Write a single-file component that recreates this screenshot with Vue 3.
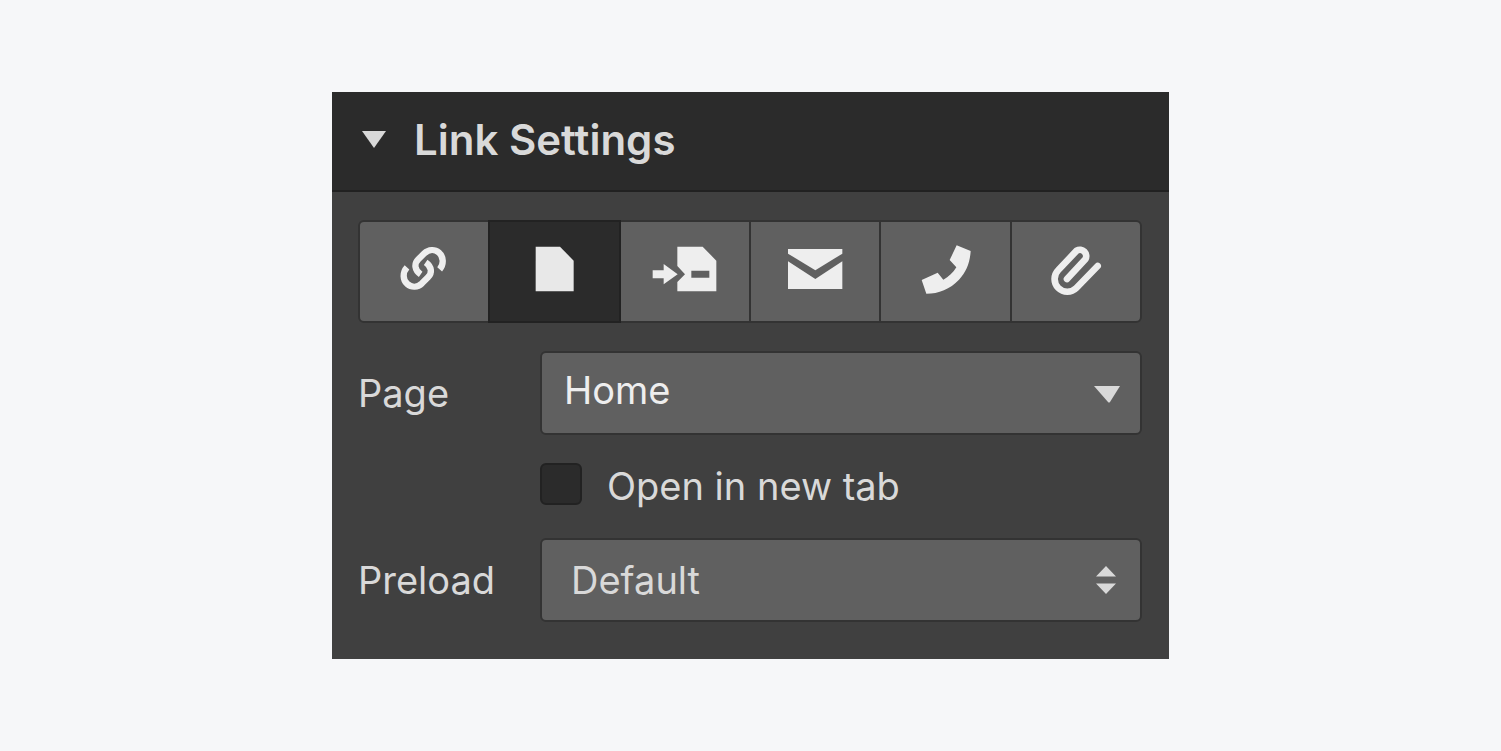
<template>
  <main class="page">
    <section class="panel">
      <header class="panel-header">
        <button type="button" class="toggle" :aria-expanded="open" @click="open = !open">
          <svg class="caret" viewBox="0 0 24 17" aria-hidden="true">
            <path d="M0 0H24L12 17Z" />
          </svg>
          <span>Link Settings</span>
        </button>
      </header>

      <form v-if="open" class="panel-body" @submit.prevent>
        <div class="types">
          <button
            v-for="type in types"
            :key="type.id"
            type="button"
            class="type"
            :class="{ active: type.id === selected }"
            :aria-label="type.label"
            :aria-pressed="type.id === selected"
            @click="selected = type.id"
          >
            <svg class="icon" viewBox="0 0 216 168" aria-hidden="true">
              <path
                v-for="d in type.paths"
                :key="d"
                :d="d"
                :class="type.stroke ? 'line line-' + type.stroke : 'solid'"
              />
            </svg>
          </button>
        </div>

        <div class="row">
          <label for="page">Page</label>
          <div class="field">
            <select id="page" v-model="page" class="select select-page">
              <option>Home</option>
            </select>
            <svg class="arrow arrow-down" viewBox="0 0 26 17" aria-hidden="true">
              <path d="M0 0H26L16 16Q15 17 14 16Z" />
            </svg>
          </div>
        </div>

        <div class="row">
          <div class="check">
            <input id="new-tab" v-model="newTab" type="checkbox" />
            <label for="new-tab">Open in new tab</label>
          </div>
        </div>

        <div class="row">
          <label for="preload">Preload</label>
          <div class="field">
            <select id="preload" v-model="preload" class="select select-preload">
              <option>Default</option>
            </select>
            <svg class="arrow arrow-both" viewBox="0 0 20 28" aria-hidden="true">
              <path d="M10 0L20 10.500H0ZM0 17.500H20L10 28Z" />
            </svg>
          </div>
        </div>
      </form>
    </section>
  </main>
</template>

<script setup>
import { ref } from 'vue'

const open = ref(true)
const selected = ref('page')
const page = ref('Home')
const newTab = ref(false)
const preload = ref('Default')

const types = [
  {
    id: 'url',
    label: 'URL',
    stroke: 'chain',
    paths: [
      'M155 79C168 64 167 41 153 29C140 18 122 19 109 31L91 49C78 62 79 81 98 94',
      'M57 73C43 88 44 111 58 123C71 134 89 133 102 121L120 103C133 90 132 71 113 58'
    ]
  },
  {
    id: 'page',
    label: 'Page',
    paths: ['M53 11H126L167 53V145H53Z']
  },
  {
    id: 'section',
    label: 'Page section',
    paths: [
      'M11 82H44V63L86 94L44 124V106H11Z',
      'M85 11H161L202 53V145H85V117L108 94L85 69ZM127 83V104H181V83Z'
    ]
  },
  {
    id: 'email',
    label: 'Email',
    paths: ['M27 18H190V32L109 82L27 32Z', 'M27 55L109 108L190 55V138H27Z']
  },
  {
    id: 'phone',
    label: 'Phone',
    paths: ['M143 7L185 24C183 60 171 87 150 110C123 138 89 152 52 152L38 111L86 89L103 110C119 102 133 88 142 73L122 51Z']
  },
  {
    id: 'file',
    label: 'File',
    stroke: 'clip',
    paths: ['M173 69L109 135A38 38 0 0 1 55 81L110 23A19 19 0 0 1 136 49L81 108']
  }
]
</script>

<style>
body {
  margin: 0;
  background: #f6f7f9;
}
</style>

<style scoped>
.page {
  box-sizing: border-box;
  min-height: 100vh;
  display: flex;
  align-items: center;
  justify-content: center;
  font-family: Inter, "Liberation Sans", sans-serif;
  font-size: 38px;
  font-weight: 400;
  line-height: 47px;
  color: #d9d9d9;
}

.panel {
  width: 100%;
  max-width: 837px;
  background: #404040;
}

.panel-header {
  background: #2b2b2b;
  border-bottom: 2px solid #212121;
}

.toggle {
  display: flex;
  align-items: center;
  gap: 28px;
  width: 100%;
  padding: 24px 30px 27px;
  border: 0;
  background: none;
  color: inherit;
  font: inherit;
  font-size: 42px;
  font-weight: 600;
  cursor: pointer;
}

.caret {
  width: 24px;
  height: 17px;
  fill: #d9d9d9;
}

.panel-body {
  display: flex;
  flex-direction: column;
  gap: 28px;
  padding: 28px 27px 37px 26px;
}

.types {
  display: flex;
}

.type {
  flex: 1;
  display: flex;
  align-items: center;
  justify-content: center;
  height: 103px;
  padding: 0 0 1px;
  border: 2px solid #333;
  background: #606060;
  cursor: pointer;
}

.type + .type {
  margin-left: -2px;
}

.type:first-child {
  border-radius: 6px 0 0 6px;
}

.type:last-child {
  border-radius: 0 6px 6px 0;
}

.type.active {
  position: relative;
  background: #2b2b2b;
  border-color: #222;
}

.icon {
  width: 72px;
  height: 56px;
}

.solid {
  fill: #eee;
  fill-rule: evenodd;
}

.active .solid {
  fill: #e8e8e8;
}

.line {
  fill: none;
  stroke: #eee;
}

.line-chain {
  stroke-width: 19;
}

.line-clip {
  stroke-width: 20;
  stroke-linecap: round;
  stroke-linejoin: round;
}

.row {
  display: grid;
  grid-template-columns: 182px 1fr;
  align-items: center;
}

.field {
  position: relative;
}

.select {
  display: block;
  box-sizing: border-box;
  width: 100%;
  height: 84px;
  margin: 0;
  border: 2px solid #333;
  border-radius: 6px;
  background: #606060;
  font: inherit;
  appearance: none;
}

.select-page {
  padding: 0 60px 5px 22px;
  color: #eee;
}

.select-preload {
  padding: 0 60px 0 29px;
  color: #d9d9d9;
}

.arrow {
  position: absolute;
  top: 0;
  bottom: 0;
  margin: auto 0;
  fill: #d9d9d9;
  pointer-events: none;
}

.arrow-down {
  top: 2px;
  right: 22px;
  width: 26px;
  height: 17px;
}

.arrow-both {
  right: 26px;
  width: 20px;
  height: 28px;
}

.check {
  grid-column: 2;
  display: flex;
  align-items: flex-start;
  gap: 25px;
}

.check input {
  width: 42px;
  height: 42px;
  margin: 0;
  border: 2px solid #222;
  border-radius: 6px;
  background: #2b2b2b;
  appearance: none;
}

.check input:checked {
  background: #d9d9d9;
}
</style>
